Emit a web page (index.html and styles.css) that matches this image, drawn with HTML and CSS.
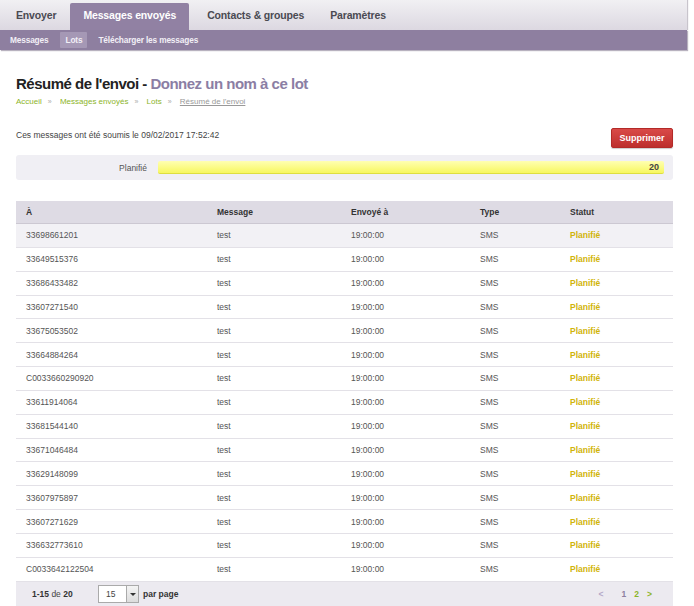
FILE: index.html
```html
<!DOCTYPE html>
<html lang="fr">
<head>
<meta charset="utf-8">
<link rel="stylesheet" href="styles.css">
</head>
<body>
<div class="page">
  <div class="topnav">
    <a class="tab t1">Envoyer</a>
    <a class="tab active">Messages envoyés</a>
    <a class="tab t3">Contacts &amp; groupes</a>
    <a class="tab t4">Paramètres</a>
  </div>
  <div class="subnav">
    <a class="sub">Messages</a>
    <a class="sub current">Lots</a>
    <a class="sub">Télécharger les messages</a>
  </div>
  <div class="content">
    <h1 class="title">Résumé de l'envoi - <span class="name">Donnez un nom à ce lot</span></h1>
    <div class="crumbs">
      <a class="crumb">Accueil</a><span class="sep">»</span>
      <a class="crumb">Messages envoyés</a><span class="sep">»</span>
      <a class="crumb">Lots</a><span class="sep">»</span>
      <span class="crumb-cur">Résumé de l'envoi</span>
    </div>
    <div class="infobar">
      <span class="submitted">Ces messages ont été soumis le 09/02/2017 17:52:42</span>
      <button class="btn-del">Supprimer</button>
    </div>
    <div class="progress">
      <span class="plabel">Planifié</span>
      <div class="bar"><span>20</span></div>
    </div>
    <table class="grid">
      <thead>
        <tr><th class="c1">À</th><th class="c2">Message</th><th class="c3">Envoyé à</th><th class="c4">Type</th><th class="c5">Statut</th></tr>
      </thead>
      <tbody>
        <tr class="odd"><td>33698661201</td><td>test</td><td>19:00:00</td><td>SMS</td><td class="st">Planifié</td></tr>
        <tr><td>33649515376</td><td>test</td><td>19:00:00</td><td>SMS</td><td class="st">Planifié</td></tr>
        <tr><td>33686433482</td><td>test</td><td>19:00:00</td><td>SMS</td><td class="st">Planifié</td></tr>
        <tr><td>33607271540</td><td>test</td><td>19:00:00</td><td>SMS</td><td class="st">Planifié</td></tr>
        <tr><td>33675053502</td><td>test</td><td>19:00:00</td><td>SMS</td><td class="st">Planifié</td></tr>
        <tr><td>33664884264</td><td>test</td><td>19:00:00</td><td>SMS</td><td class="st">Planifié</td></tr>
        <tr><td>C0033660290920</td><td>test</td><td>19:00:00</td><td>SMS</td><td class="st">Planifié</td></tr>
        <tr><td>33611914064</td><td>test</td><td>19:00:00</td><td>SMS</td><td class="st">Planifié</td></tr>
        <tr><td>33681544140</td><td>test</td><td>19:00:00</td><td>SMS</td><td class="st">Planifié</td></tr>
        <tr><td>33671046484</td><td>test</td><td>19:00:00</td><td>SMS</td><td class="st">Planifié</td></tr>
        <tr><td>33629148099</td><td>test</td><td>19:00:00</td><td>SMS</td><td class="st">Planifié</td></tr>
        <tr><td>33607975897</td><td>test</td><td>19:00:00</td><td>SMS</td><td class="st">Planifié</td></tr>
        <tr><td>33607271629</td><td>test</td><td>19:00:00</td><td>SMS</td><td class="st">Planifié</td></tr>
        <tr><td>336632773610</td><td>test</td><td>19:00:00</td><td>SMS</td><td class="st">Planifié</td></tr>
        <tr><td>C0033642122504</td><td>test</td><td>19:00:00</td><td>SMS</td><td class="st">Planifié</td></tr>
      </tbody>
    </table>
    <div class="pager">
      <span class="count"><b>1-15</b> de <b>20</b></span>
      <span class="select"><span class="val">15</span><span class="arrow"></span></span>
      <span class="perpage">par page</span>
      <span class="pages">
        <a class="prev">&lt;</a>
        <a class="pnum">1</a>
        <a class="pnum cur">2</a>
        <a class="next">&gt;</a>
      </span>
    </div>
  </div>
</div>
</body>
</html>
```
FILE: styles.css
```css
html, body {
  margin: 0;
  padding: 0;
  background: #fff;
}
body {
  font-family: "Liberation Sans", Arial, sans-serif;
  color: #444;
  font-size: 9px;
}
.page {
  width: 687px;
}
.topnav {
  height: 30px;
  display: flex;
  align-items: flex-end;
  background: linear-gradient(#f1f0f3, #dcd8e1);
  box-shadow: 1px 0 1px #c8c4cc;
}
.tab {
  font-size: 10.5px;
  font-weight: bold;
  color: #4a4a52;
  height: 27px;
  line-height: 25px;
  display: block;
  white-space: nowrap;
  letter-spacing: -0.15px;
}
.t1 { padding: 0 14px 0 16px; }
.tab.active {
  background: #9181a3;
  color: #fff;
  padding: 0 13px;
  border-radius: 2px 2px 0 0;
}
.t3 { padding: 0 26px 0 18px; }
.t4 { padding: 0; }
.subnav {
  height: 20px;
  background: #8e7fa0;
  display: flex;
  align-items: center;
  padding-left: 5px;
  box-shadow: 1px 1px 1px #b8b2bf;
}
.sub {
  font-size: 8.3px;
  font-weight: bold;
  color: #f2eff6;
  padding: 3px 5px;
  line-height: 10px;
  letter-spacing: -0.15px;
  white-space: nowrap;
}
.sub.current {
  background: #a598b5;
  border-radius: 1px;
  margin: 0 6px 0 7px;
  padding: 3px 5px;
}
.content {
  padding: 0 14px 0 16px;
}
.title {
  margin: 24px 0 0 0;
  font-size: 15px;
  font-weight: bold;
  color: #222;
  letter-spacing: -0.5px;
  line-height: 20px;
}
.title .name { color: #8b7ea4; }
.crumbs {
  margin-top: 3px;
  font-size: 8px;
  line-height: 10px;
}
.crumb { color: #8cb42a; }
.sep { color: #aaa; margin: 0 6px; font-size: 7px; }
.crumb-cur { color: #999; text-decoration: underline; }
.infobar {
  margin-top: 21px;
  display: flex;
  justify-content: space-between;
  align-items: flex-start;
}
.submitted {
  font-size: 8.5px;
  color: #444;
  margin-top: 2px;
}
.btn-del {
  font-family: "Liberation Sans", Arial, sans-serif;
  font-size: 9px;
  font-weight: bold;
  color: #fff;
  background: linear-gradient(#d94a48, #bd2f2d);
  border: 1px solid #b32a28;
  border-radius: 2px;
  width: 62px;
  height: 20px;
  padding: 0;
  box-shadow: 0 1px 1px rgba(0,0,0,0.2);
}
.progress {
  margin-top: 7px;
  height: 25px;
  background: #f0eff4;
  border-radius: 3px;
  display: flex;
  align-items: center;
}
.plabel {
  width: 131px;
  text-align: right;
  font-size: 8.5px;
  color: #555;
}
.bar {
  margin-left: 11px;
  flex: 1;
  margin-right: 9px;
  height: 13px;
  background: linear-gradient(#ffffb2, #f7f760);
  border-bottom: 1px solid #dede40;
  border-radius: 2px;
  text-align: right;
  box-sizing: border-box;
}
.bar span {
  font-size: 9px;
  font-weight: bold;
  color: #444;
  line-height: 13px;
  padding-right: 5px;
}
.grid {
  margin-top: 21px;
  width: 657px;
  border-collapse: collapse;
  font-size: 8.5px;
}
.grid th {
  background: #dedbe4;
  height: 22px;
  padding: 0;
  text-align: left;
  font-weight: bold;
  color: #333;
  border-bottom: 1px solid #ccc8d2;
}
.grid th.c1, .grid td:first-child { padding-left: 10px; }
.c1 { width: 191px; }
.c2 { width: 134px; }
.c3 { width: 129px; }
.c4 { width: 90px; }
.grid td {
  height: 22.85px;
  padding: 0;
  border-bottom: 1px solid #e3e1e7;
  color: #555;
}
.grid tr.odd td { background: #f2f1f5; }
.grid td.st { color: #d1b40a; font-weight: bold; }
.pager {
  width: 657px;
  height: 25px;
  background: #eceaf0;
  display: flex;
  align-items: center;
  font-size: 8.5px;
  color: #444;
}
.count { margin-left: 16px; width: 66px; }
.count b { color: #333; }
.select {
  display: flex;
  height: 18px;
  width: 41px;
  border: 1px solid #aaa;
  background: #fff;
  box-sizing: border-box;
}
.select .val { flex: 1; padding-left: 7px; line-height: 16px; color: #444; }
.select .arrow {
  width: 11px;
  border-left: 1px solid #aaa;
  background: linear-gradient(#f4f4f4, #dcdcdc);
  position: relative;
}
.select .arrow::after {
  content: "";
  position: absolute;
  left: 3px;
  top: 7px;
  border-left: 3px solid transparent;
  border-right: 3px solid transparent;
  border-top: 3px solid #333;
}
.perpage { margin-left: 4px; font-weight: bold; color: #333; }
.pages {
  margin-left: auto;
  margin-right: 21px;
  display: flex;
  font-weight: bold;
}
.prev { color: #b4a8c8; margin-right: 18px; }
.pnum { color: #8e7fa0; margin-right: 8px; }
.pnum.cur { color: #8cb42a; }
.next { color: #8cb42a; }
```
